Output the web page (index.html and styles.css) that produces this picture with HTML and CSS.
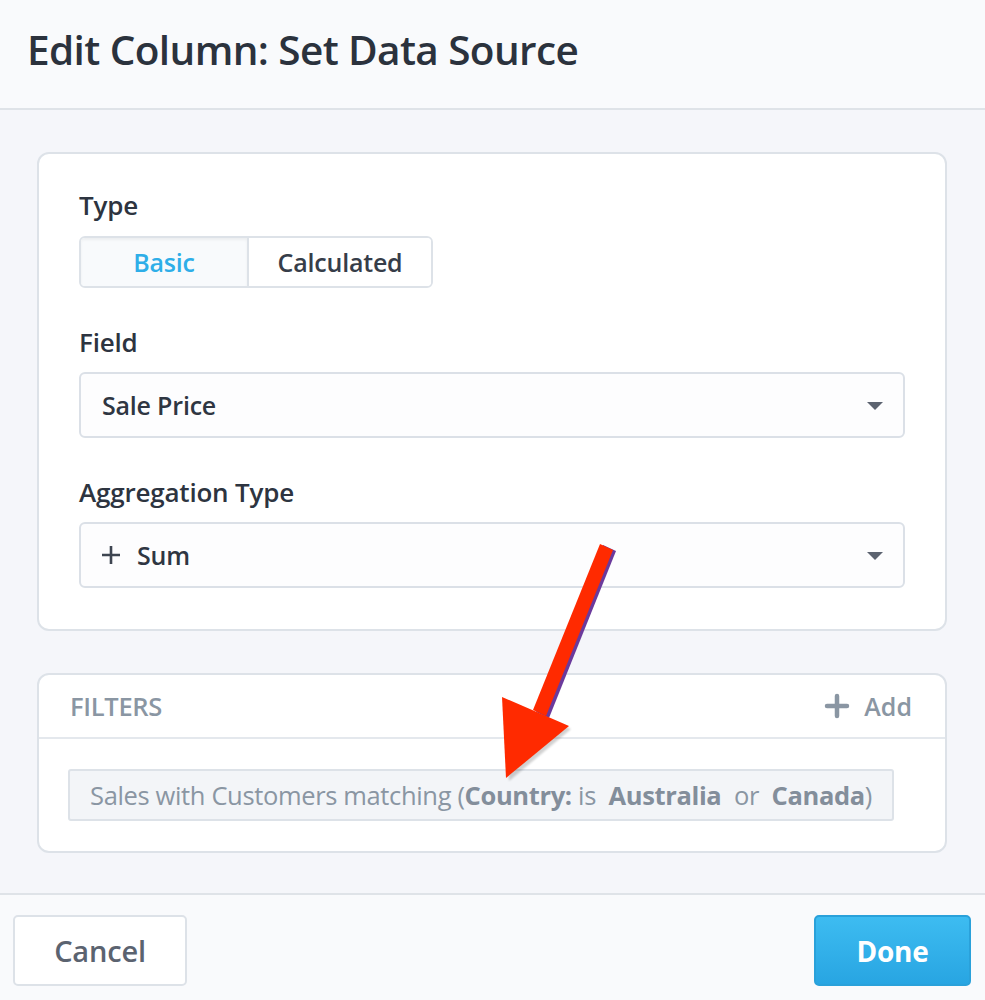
FILE: index.html
```html
<!DOCTYPE html>
<html>
<head>
<meta charset="utf-8">
<link rel="stylesheet" href="styles.css">
</head>
<body>
<div class="dialog">
  <header class="head">
    <h1 class="title">Edit Column: Set Data Source</h1>
  </header>
  <main class="content">
    <section class="card main-card">
      <div class="label">Type</div>
      <div class="segmented">
        <div class="seg seg-active">Basic</div>
        <div class="seg">Calculated</div>
      </div>
      <div class="label label-gap">Field</div>
      <div class="select">
        <span class="select-text">Sale Price</span>
        <span class="caret"></span>
      </div>
      <div class="label label-gap">Aggregation Type</div>
      <div class="select">
        <span class="select-text">
          <svg class="plus-sm" width="22" height="22" viewBox="0 0 22 22"><path d="M11 2V20M2 11H20" stroke="#3e4551" stroke-width="2.6" fill="none"/></svg>
          Sum
        </span>
        <span class="caret"></span>
      </div>
    </section>
    <section class="card filters-card">
      <div class="filters-head">
        <span class="filters-title">FILTERS</span>
        <span class="add">
          <svg class="plus-lg" width="26" height="26" viewBox="0 0 26 26"><path d="M13 3V23M3 13H23" stroke="#8a96a3" stroke-width="4.5" stroke-linecap="round" fill="none"/></svg>
          Add
        </span>
      </div>
      <div class="filters-body">
        <div class="chip">Sales with Customers matching (<b>Country:</b> is&nbsp; <b>Australia</b>&nbsp; or&nbsp; <b>Canada</b>)</div>
      </div>
    </section>
  </main>
  <footer class="foot">
    <button class="btn btn-cancel">Cancel</button>
    <button class="btn btn-done">Done</button>
  </footer>
  <svg class="arrow" width="985" height="1000" viewBox="0 0 985 1000">
    <defs>
      <filter id="sh" x="-20%" y="-20%" width="140%" height="140%">
        <feGaussianBlur stdDeviation="1.2"/>
      </filter>
    </defs>
    <polygon points="603,545 616,551 549,718 536,712" fill="#6b3a9c"/>
    <polygon points="502,698 569,727 507,779" fill="#000" opacity="0.18" filter="url(#sh)" transform="translate(2,2)"/>
    <polygon points="600,544 613,550 546,716 533,710" fill="#ff2a00"/>
    <polygon points="502,697 569,726 506,778" fill="#ff2a00"/>
  </svg>
</div>
</body>
</html>
```

FILE: styles.css
```css
* { box-sizing: border-box; }
html, body { margin: 0; padding: 0; }
body {
  font-family: "Open Sans", "Liberation Sans", sans-serif;
  color: #2d3440;
  background: #f5f6fa;
}
.dialog {
  position: relative;
  width: 985px;
  height: 1000px;
  display: flex;
  flex-direction: column;
  overflow: hidden;
}
.head {
  height: 110px;
  background: #f9fafc;
  border-bottom: 2px solid #dfe3e8;
  padding-left: 27px;
  display: flex;
  align-items: center;
}
.title {
  margin: 0;
  font-size: 40.5px;
  font-weight: 600;
  color: #2b323d;
  letter-spacing: -0.6px;
  position: relative;
  top: -5px;
}
.content {
  flex: 1;
  padding: 42px 38px 0 37px;
  display: flex;
  flex-direction: column;
  gap: 42px;
}
.card {
  background: #fff;
  border: 2px solid #dde2e8;
  border-radius: 12px;
}
.main-card {
  padding: 36px 40px 41px 40px;
  display: flex;
  flex-direction: column;
  align-items: flex-start;
}
.label {
  font-size: 26px;
  font-weight: 600;
  line-height: 32px;
  color: #2d3440;
  margin-bottom: 14px;
  letter-spacing: -0.2px;
  position: relative;
  top: -1px;
}
.label-gap { margin-top: 39px; margin-bottom: 13px; }
.segmented {
  display: flex;
  height: 52px;
  border: 2px solid #dde2e8;
  border-radius: 6px;
  overflow: hidden;
}
.seg {
  display: flex;
  align-items: center;
  justify-content: center;
  font-size: 25px;
  font-weight: 600;
  color: #363d49;
  width: 182px;
  background: #fff;
  letter-spacing: -0.2px;
}
.seg-active {
  width: 168px;
  color: #2eaee8;
  background: #f8fafc;
  border-right: 2px solid #dde2e8;
  box-shadow: inset 0 2px 3px rgba(0,0,0,0.05);
}
.select {
  align-self: stretch;
  height: 66px;
  border: 2px solid #dbe0e7;
  border-radius: 6px;
  background: #fdfdfe;
  display: flex;
  align-items: center;
  justify-content: space-between;
  padding: 0 20px 0 21px;
}
.select-text {
  font-size: 25px;
  font-weight: 600;
  color: #2f3642;
  display: flex;
  align-items: center;
  gap: 15px;
  letter-spacing: -0.2px;
}
.plus-sm { margin-left: -2px; }
.caret {
  width: 0;
  height: 0;
  border-left: 8px solid transparent;
  border-right: 8px solid transparent;
  border-top: 8px solid #5c6370;
  margin-top: 2px;
}
.filters-card {
  display: flex;
  flex-direction: column;
}
.filters-head {
  height: 64px;
  border-bottom: 2px solid #e4e8ed;
  display: flex;
  align-items: center;
  justify-content: space-between;
  padding: 0 33px 0 31px;
}
.filters-title {
  font-size: 25.5px;
  font-weight: 600;
  color: #8a96a3;
  letter-spacing: -0.3px;
}
.add {
  display: flex;
  align-items: center;
  gap: 14px;
  font-size: 25px;
  font-weight: 600;
  color: #8a96a3;
}
.filters-body {
  padding: 30px 29px 30px 29px;
  display: flex;
}
.chip {
  height: 52px;
  background: #f3f5f8;
  border: 2px solid #dde2e8;
  border-radius: 3px;
  padding: 0 20px;
  display: flex;
  align-items: center;
  font-size: 25.5px;
  color: #8a96a3;
  letter-spacing: -0.35px;
  white-space: pre;
}
.chip b { font-weight: 700; color: #838e9b; }
.foot {
  height: 107px;
  background: #f9fafc;
  border-top: 2px solid #dfe3e8;
  display: flex;
  justify-content: space-between;
  align-items: flex-start;
  padding: 20px 14px 0 13px;
}
.btn {
  height: 71px;
  border-radius: 5px;
  font-family: inherit;
  font-size: 29px;
  font-weight: 600;
  cursor: pointer;
  letter-spacing: -0.2px;
}
.btn-cancel {
  width: 174px;
  background: #fff;
  border: 2px solid #dde2e8;
  color: #5b6370;
}
.btn-done {
  width: 157px;
  background: linear-gradient(#3dbcf1, #28a5e2);
  border: 2px solid #2aa1da;
  color: #fff;
  font-weight: 700;
  font-size: 28px;
}
.arrow {
  position: absolute;
  left: 0;
  top: 0;
  pointer-events: none;
}
```
